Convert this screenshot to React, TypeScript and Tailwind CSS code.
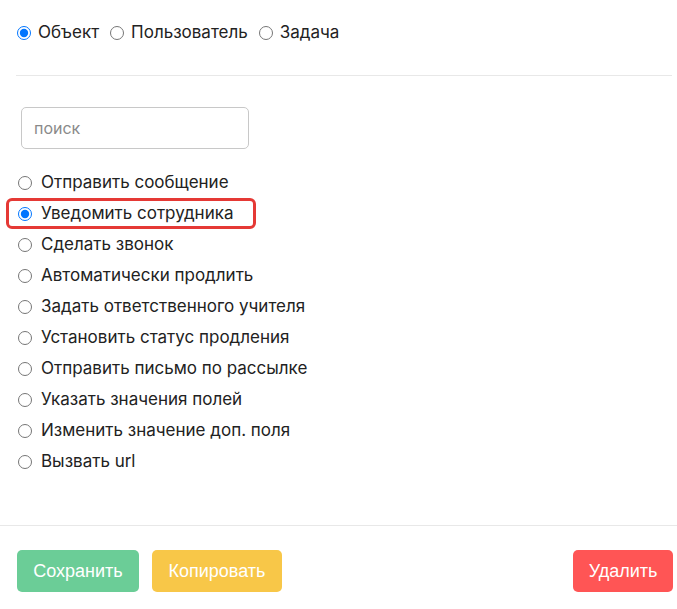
import { useState } from 'react'

const actions = [
  'Отправить сообщение',
  'Уведомить сотрудника',
  'Сделать звонок',
  'Автоматически продлить',
  'Задать ответственного учителя',
  'Установить статус продления',
  'Отправить письмо по рассылке',
  'Указать значения полей',
  'Изменить значение доп. поля',
  'Вызвать url',
]

const targets = ['Объект', 'Пользователь', 'Задача']

export default function App() {
  const [target, setTarget] = useState('Объект')
  const [action, setAction] = useState('Уведомить сотрудника')

  return (
    <div className="w-[677px] h-[609px] bg-white text-[#222] font-['Inter','Noto_Sans',sans-serif] text-[17px]">
      <div className="pl-4 pr-[5px]">
        <div className="flex items-center gap-[10px] pt-[23px] h-[42px]">
          {targets.map((t) => (
            <label key={t} className="flex items-center gap-[7px] cursor-pointer">
              <input
                type="radio"
                name="target"
                checked={target === t}
                onChange={() => setTarget(t)}
                className="m-0 ml-[1px] h-[14px] w-[14px]"
              />
              <span>{t}</span>
            </label>
          ))}
        </div>
        <div className="mt-[33px] h-px bg-[#e8e8e8]" />
      </div>

      <div className="pl-[21px] pt-[31px]">
        <input
          type="text"
          placeholder="поиск"
          className="h-[42px] w-[228px] rounded-[5px] border border-[#c8c8c8] px-3 text-[16px] outline-none placeholder:text-[#8a8a8a]"
        />
      </div>

      <div className="mt-[18px] pl-[6px] flex flex-col">
        {actions.map((a) => {
          const selected = action === a
          return (
            <label
              key={a}
              className={
                'flex h-[31px] w-[250px] items-center gap-[9px] rounded-[6px] pl-[9px] cursor-pointer border-[3px] ' +
                (selected ? 'border-[#e53935]' : 'border-transparent')
              }
            >
              <input
                type="radio"
                name="action"
                checked={selected}
                onChange={() => setAction(a)}
                className="m-0 h-[14px] w-[14px] shrink-0"
              />
              <span className="whitespace-nowrap">{a}</span>
            </label>
          )
        })}
      </div>

      <div className="mt-[48px] h-px bg-[#e8e8e8]" />

      <div className="flex items-center justify-between pl-[17px] pr-[4px] pt-[24px] font-['Liberation_Sans',sans-serif] text-[18px] text-white">
        <div className="flex gap-[13px]">
          <button type="button" className="h-[42px] w-[122px] rounded-[5px] bg-[#6bcd97]">
            Сохранить
          </button>
          <button type="button" className="h-[42px] w-[130px] rounded-[5px] bg-[#f8c748]">
            Копировать
          </button>
        </div>
        <button type="button" className="h-[42px] w-[100px] rounded-[5px] bg-[#ff5555]">
          Удалить
        </button>
      </div>
    </div>
  )
}
